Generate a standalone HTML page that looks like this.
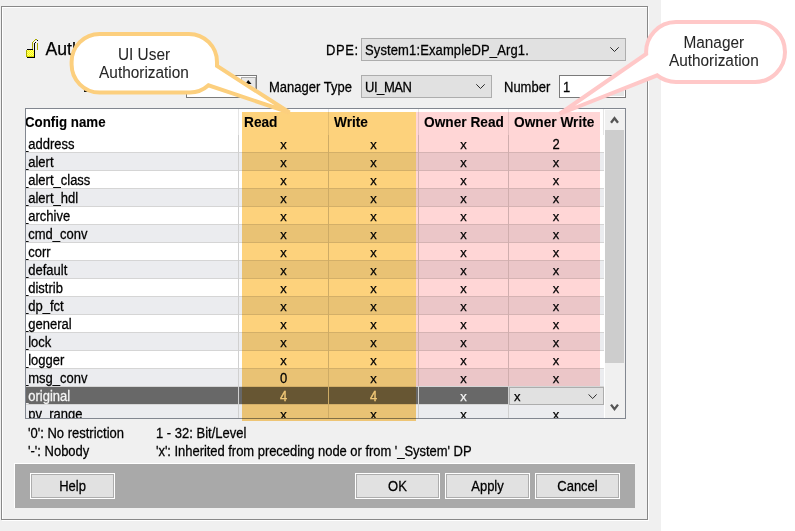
<!DOCTYPE html><html><head><meta charset="utf-8"><style>
*{margin:0;padding:0;box-sizing:border-box}
html,body{width:795px;height:531px;overflow:hidden}
body{position:relative;background:#fff;font-family:"Liberation Sans",sans-serif;color:#000;font-size:13px;-webkit-text-stroke:0.25px currentColor}
.a{position:absolute}
.bg{left:0;top:0;width:661px;height:531px;background:#f0f0f0}
.fr1{left:1px;top:6px;width:647px;height:514px;border:1px solid #888}
.fr2{left:2px;top:7px;width:647px;height:514px;border:1px solid #fff}
.t{white-space:nowrap;line-height:13px;transform:scaleY(1.08);transform-origin:0 11px}
.hd{white-space:nowrap;line-height:14px;font-weight:bold;font-size:13.7px;-webkit-text-stroke:0.1px #000;transform:scaleY(1.11);transform-origin:0 2px}
.ct{position:absolute;white-space:nowrap;text-align:center;font-size:15.4px;line-height:18px;color:#262626;-webkit-text-stroke:0.05px #262626;transform:scaleY(1.12);transform-origin:50% 14px}
.combo{background:#e1e1e1;border:1px solid #adadad}
.spin{background:#fff;border:1px solid #7a7a7a}
.btnbar{left:14px;top:463px;width:621px;height:45px;background:#a9a9a9;border-top:1px solid #fff;border-left:1px solid #fff}
.btn{top:473px;width:85px;height:26px;border:1px solid #fff;background:#e1e1e1}
.btn i{position:absolute;left:0;top:0;right:0;bottom:0;border:1px solid #adadad}
.btn span{position:absolute;left:0;right:0;top:6px;text-align:center;font-size:13px;line-height:13px;transform:scaleY(1.1);transform-origin:50% 11px}
.tbl{left:25px;top:108px;width:601px;height:311px;border:1px solid #828790;background:#fff;overflow:hidden}
.row{left:0;width:578px;height:18px}
.cell{position:absolute;top:0;height:17px;text-align:center;line-height:17px;font-size:13px}
.ov{mix-blend-mode:multiply}
</style></head><body>
<div class="a bg"></div>
<div class="a fr2"></div><div class="a fr1"></div>
<svg class="a" style="left:24px;top:37px" width="16" height="22" shape-rendering="crispEdges"><rect x="3" y="13" width="7" height="7" fill="#fbfb80"/><rect x="4" y="13" width="1" height="1" fill="#ffff00"/><rect x="6" y="13" width="1" height="1" fill="#ffff00"/><rect x="8" y="13" width="1" height="1" fill="#ffff00"/><rect x="3" y="14" width="1" height="1" fill="#ffff00"/><rect x="5" y="14" width="1" height="1" fill="#ffff00"/><rect x="7" y="14" width="1" height="1" fill="#ffff00"/><rect x="9" y="14" width="1" height="1" fill="#ffff00"/><rect x="4" y="15" width="1" height="1" fill="#ffff00"/><rect x="6" y="15" width="1" height="1" fill="#ffff00"/><rect x="8" y="15" width="1" height="1" fill="#ffff00"/><rect x="3" y="16" width="1" height="1" fill="#ffff00"/><rect x="5" y="16" width="1" height="1" fill="#ffff00"/><rect x="7" y="16" width="1" height="1" fill="#ffff00"/><rect x="9" y="16" width="1" height="1" fill="#ffff00"/><rect x="4" y="17" width="1" height="1" fill="#ffff00"/><rect x="6" y="17" width="1" height="1" fill="#ffff00"/><rect x="8" y="17" width="1" height="1" fill="#ffff00"/><rect x="3" y="18" width="1" height="1" fill="#ffff00"/><rect x="5" y="18" width="1" height="1" fill="#ffff00"/><rect x="7" y="18" width="1" height="1" fill="#ffff00"/><rect x="9" y="18" width="1" height="1" fill="#ffff00"/><rect x="4" y="19" width="1" height="1" fill="#ffff00"/><rect x="6" y="19" width="1" height="1" fill="#ffff00"/><rect x="8" y="19" width="1" height="1" fill="#ffff00"/><rect x="3" y="19" width="7" height="1" fill="#d8d800"/><rect x="3" y="12" width="6" height="1" fill="#000"/><rect x="2" y="13" width="1" height="7" fill="#a8a800"/><rect x="3" y="20" width="8" height="1" fill="#000"/><rect x="10" y="6" width="1" height="14" fill="#000"/><rect x="8" y="5" width="1" height="7" fill="#a8a800"/><rect x="9" y="4" width="1" height="1" fill="#a8a800"/><rect x="10" y="3" width="1" height="1" fill="#a8a800"/><rect x="11" y="2" width="2" height="1" fill="#a8a800"/><rect x="13" y="3" width="1" height="1" fill="#000"/><rect x="11" y="5" width="1" height="1" fill="#000"/><rect x="13" y="6" width="1" height="7" fill="#a8a800"/></svg>
<div class="a" style="left:45.5px;top:38.7px;font-size:17.6px;line-height:20px;white-space:nowrap">Authorization</div>
<div class="a t" style="left:326px;top:44px;letter-spacing:0.6px">DPE:</div>
<div class="a combo" style="left:361px;top:38px;width:265px;height:23px"></div>
<div class="a t" style="left:365px;top:44px;letter-spacing:0.12px">System1:ExampleDP_Arg1.</div>
<svg class="a" style="left:609px;top:46px" width="12" height="8"><path d="M1.3 1.3 L5.5 5.5 L9.7 1.3" fill="none" stroke="#2a2a2a" stroke-width="1"/></svg>
<div class="a" style="left:84px;top:90px;width:4px;height:2px;background:#111"></div>
<div class="a spin" style="left:186px;top:75px;width:71px;height:23px"></div>
<div class="a" style="left:241px;top:77px;width:15px;height:12px;background:#e8e8e8;border:1px solid #adadad"></div>
<svg class="a" style="left:245px;top:79px" width="8" height="6"><path d="M0.3 5 L3.2 1 L6.5 5Z" fill="#000"/></svg>
<div class="a t" style="left:269px;top:81px">Manager Type</div>
<div class="a combo" style="left:361px;top:75px;width:131px;height:23px"></div>
<div class="a t" style="left:365px;top:81px;letter-spacing:-0.45px">UI_MAN</div>
<svg class="a" style="left:475px;top:83px" width="12" height="8"><path d="M1.3 1.3 L5.5 5.5 L9.7 1.3" fill="none" stroke="#2a2a2a" stroke-width="1"/></svg>
<div class="a t" style="left:504px;top:81px">Number</div>
<div class="a spin" style="left:559px;top:75px;width:67px;height:23px"></div>
<div class="a" style="left:611px;top:77px;width:13px;height:19px;background:#e5e5e5"></div>
<div class="a t" style="left:563px;top:81px">1</div>
<div class="a tbl">
<div class="a" style="left:212px;top:0;width:1px;height:26px;background:#e5e5e5"></div>
<div class="a" style="left:302px;top:0;width:1px;height:26px;background:#e5e5e5"></div>
<div class="a" style="left:392px;top:0;width:1px;height:26px;background:#e5e5e5"></div>
<div class="a" style="left:482px;top:0;width:1px;height:26px;background:#e5e5e5"></div>
<div class="a" style="left:577px;top:0;width:1px;height:26px;background:#e5e5e5"></div>
<div class="a hd" style="left:-1px;top:6px;font-size:13.3px;">Config name</div>
<div class="a hd" style="left:218px;top:6px;">Read</div>
<div class="a hd" style="left:308px;top:6px;">Write</div>
<div class="a hd" style="left:398px;top:6px;">Owner Read</div>
<div class="a hd" style="left:488px;top:6px;">Owner Write</div>
<div class="a" style="left:0;top:26px;width:578px;height:17px;background:#ffffff"></div>
<div class="a" style="left:0;top:43px;width:578px;height:1px;background:#d5d5d5"></div>
<div class="a t" style="left:-5px;top:29px;color:#000">_address</div>
<div class="a" style="left:302px;top:26px;width:1px;height:18px;background:#d0d0d0"></div>
<div class="a t" style="left:213px;top:29px;width:89px;text-align:center;color:#000;transform:none">x</div>
<div class="a" style="left:392px;top:26px;width:1px;height:18px;background:#d0d0d0"></div>
<div class="a t" style="left:303px;top:29px;width:89px;text-align:center;color:#000;transform:none">x</div>
<div class="a" style="left:482px;top:26px;width:1px;height:18px;background:#d0d0d0"></div>
<div class="a t" style="left:393px;top:29px;width:89px;text-align:center;color:#000;transform:none">x</div>
<div class="a t" style="left:483px;top:29px;width:94px;text-align:center;color:#000;transform:scaleY(1.1)">2</div>
<div class="a" style="left:212px;top:26px;width:1px;height:18px;background:#d0d0d0"></div>
<div class="a" style="left:0;top:44px;width:578px;height:17px;background:#ebecef"></div>
<div class="a" style="left:0;top:61px;width:578px;height:1px;background:#d5d5d5"></div>
<div class="a t" style="left:-5px;top:47px;color:#000">_alert</div>
<div class="a" style="left:302px;top:44px;width:1px;height:18px;background:#d0d0d0"></div>
<div class="a t" style="left:213px;top:47px;width:89px;text-align:center;color:#000;transform:none">x</div>
<div class="a" style="left:392px;top:44px;width:1px;height:18px;background:#d0d0d0"></div>
<div class="a t" style="left:303px;top:47px;width:89px;text-align:center;color:#000;transform:none">x</div>
<div class="a" style="left:482px;top:44px;width:1px;height:18px;background:#d0d0d0"></div>
<div class="a t" style="left:393px;top:47px;width:89px;text-align:center;color:#000;transform:none">x</div>
<div class="a t" style="left:483px;top:47px;width:94px;text-align:center;color:#000;transform:none">x</div>
<div class="a" style="left:212px;top:44px;width:1px;height:18px;background:#d0d0d0"></div>
<div class="a" style="left:0;top:62px;width:578px;height:17px;background:#ffffff"></div>
<div class="a" style="left:0;top:79px;width:578px;height:1px;background:#d5d5d5"></div>
<div class="a t" style="left:-5px;top:65px;color:#000">_alert_class</div>
<div class="a" style="left:302px;top:62px;width:1px;height:18px;background:#d0d0d0"></div>
<div class="a t" style="left:213px;top:65px;width:89px;text-align:center;color:#000;transform:none">x</div>
<div class="a" style="left:392px;top:62px;width:1px;height:18px;background:#d0d0d0"></div>
<div class="a t" style="left:303px;top:65px;width:89px;text-align:center;color:#000;transform:none">x</div>
<div class="a" style="left:482px;top:62px;width:1px;height:18px;background:#d0d0d0"></div>
<div class="a t" style="left:393px;top:65px;width:89px;text-align:center;color:#000;transform:none">x</div>
<div class="a t" style="left:483px;top:65px;width:94px;text-align:center;color:#000;transform:none">x</div>
<div class="a" style="left:212px;top:62px;width:1px;height:18px;background:#d0d0d0"></div>
<div class="a" style="left:0;top:80px;width:578px;height:17px;background:#ebecef"></div>
<div class="a" style="left:0;top:97px;width:578px;height:1px;background:#d5d5d5"></div>
<div class="a t" style="left:-5px;top:83px;color:#000">_alert_hdl</div>
<div class="a" style="left:302px;top:80px;width:1px;height:18px;background:#d0d0d0"></div>
<div class="a t" style="left:213px;top:83px;width:89px;text-align:center;color:#000;transform:none">x</div>
<div class="a" style="left:392px;top:80px;width:1px;height:18px;background:#d0d0d0"></div>
<div class="a t" style="left:303px;top:83px;width:89px;text-align:center;color:#000;transform:none">x</div>
<div class="a" style="left:482px;top:80px;width:1px;height:18px;background:#d0d0d0"></div>
<div class="a t" style="left:393px;top:83px;width:89px;text-align:center;color:#000;transform:none">x</div>
<div class="a t" style="left:483px;top:83px;width:94px;text-align:center;color:#000;transform:none">x</div>
<div class="a" style="left:212px;top:80px;width:1px;height:18px;background:#d0d0d0"></div>
<div class="a" style="left:0;top:98px;width:578px;height:17px;background:#ffffff"></div>
<div class="a" style="left:0;top:115px;width:578px;height:1px;background:#d5d5d5"></div>
<div class="a t" style="left:-5px;top:101px;color:#000">_archive</div>
<div class="a" style="left:302px;top:98px;width:1px;height:18px;background:#d0d0d0"></div>
<div class="a t" style="left:213px;top:101px;width:89px;text-align:center;color:#000;transform:none">x</div>
<div class="a" style="left:392px;top:98px;width:1px;height:18px;background:#d0d0d0"></div>
<div class="a t" style="left:303px;top:101px;width:89px;text-align:center;color:#000;transform:none">x</div>
<div class="a" style="left:482px;top:98px;width:1px;height:18px;background:#d0d0d0"></div>
<div class="a t" style="left:393px;top:101px;width:89px;text-align:center;color:#000;transform:none">x</div>
<div class="a t" style="left:483px;top:101px;width:94px;text-align:center;color:#000;transform:none">x</div>
<div class="a" style="left:212px;top:98px;width:1px;height:18px;background:#d0d0d0"></div>
<div class="a" style="left:0;top:116px;width:578px;height:17px;background:#ebecef"></div>
<div class="a" style="left:0;top:133px;width:578px;height:1px;background:#d5d5d5"></div>
<div class="a t" style="left:-5px;top:119px;color:#000">_cmd_conv</div>
<div class="a" style="left:302px;top:116px;width:1px;height:18px;background:#d0d0d0"></div>
<div class="a t" style="left:213px;top:119px;width:89px;text-align:center;color:#000;transform:none">x</div>
<div class="a" style="left:392px;top:116px;width:1px;height:18px;background:#d0d0d0"></div>
<div class="a t" style="left:303px;top:119px;width:89px;text-align:center;color:#000;transform:none">x</div>
<div class="a" style="left:482px;top:116px;width:1px;height:18px;background:#d0d0d0"></div>
<div class="a t" style="left:393px;top:119px;width:89px;text-align:center;color:#000;transform:none">x</div>
<div class="a t" style="left:483px;top:119px;width:94px;text-align:center;color:#000;transform:none">x</div>
<div class="a" style="left:212px;top:116px;width:1px;height:18px;background:#d0d0d0"></div>
<div class="a" style="left:0;top:134px;width:578px;height:17px;background:#ffffff"></div>
<div class="a" style="left:0;top:151px;width:578px;height:1px;background:#d5d5d5"></div>
<div class="a t" style="left:-5px;top:137px;color:#000">_corr</div>
<div class="a" style="left:302px;top:134px;width:1px;height:18px;background:#d0d0d0"></div>
<div class="a t" style="left:213px;top:137px;width:89px;text-align:center;color:#000;transform:none">x</div>
<div class="a" style="left:392px;top:134px;width:1px;height:18px;background:#d0d0d0"></div>
<div class="a t" style="left:303px;top:137px;width:89px;text-align:center;color:#000;transform:none">x</div>
<div class="a" style="left:482px;top:134px;width:1px;height:18px;background:#d0d0d0"></div>
<div class="a t" style="left:393px;top:137px;width:89px;text-align:center;color:#000;transform:none">x</div>
<div class="a t" style="left:483px;top:137px;width:94px;text-align:center;color:#000;transform:none">x</div>
<div class="a" style="left:212px;top:134px;width:1px;height:18px;background:#d0d0d0"></div>
<div class="a" style="left:0;top:152px;width:578px;height:17px;background:#ebecef"></div>
<div class="a" style="left:0;top:169px;width:578px;height:1px;background:#d5d5d5"></div>
<div class="a t" style="left:-5px;top:155px;color:#000">_default</div>
<div class="a" style="left:302px;top:152px;width:1px;height:18px;background:#d0d0d0"></div>
<div class="a t" style="left:213px;top:155px;width:89px;text-align:center;color:#000;transform:none">x</div>
<div class="a" style="left:392px;top:152px;width:1px;height:18px;background:#d0d0d0"></div>
<div class="a t" style="left:303px;top:155px;width:89px;text-align:center;color:#000;transform:none">x</div>
<div class="a" style="left:482px;top:152px;width:1px;height:18px;background:#d0d0d0"></div>
<div class="a t" style="left:393px;top:155px;width:89px;text-align:center;color:#000;transform:none">x</div>
<div class="a t" style="left:483px;top:155px;width:94px;text-align:center;color:#000;transform:none">x</div>
<div class="a" style="left:212px;top:152px;width:1px;height:18px;background:#d0d0d0"></div>
<div class="a" style="left:0;top:170px;width:578px;height:17px;background:#ffffff"></div>
<div class="a" style="left:0;top:187px;width:578px;height:1px;background:#d5d5d5"></div>
<div class="a t" style="left:-5px;top:173px;color:#000">_distrib</div>
<div class="a" style="left:302px;top:170px;width:1px;height:18px;background:#d0d0d0"></div>
<div class="a t" style="left:213px;top:173px;width:89px;text-align:center;color:#000;transform:none">x</div>
<div class="a" style="left:392px;top:170px;width:1px;height:18px;background:#d0d0d0"></div>
<div class="a t" style="left:303px;top:173px;width:89px;text-align:center;color:#000;transform:none">x</div>
<div class="a" style="left:482px;top:170px;width:1px;height:18px;background:#d0d0d0"></div>
<div class="a t" style="left:393px;top:173px;width:89px;text-align:center;color:#000;transform:none">x</div>
<div class="a t" style="left:483px;top:173px;width:94px;text-align:center;color:#000;transform:none">x</div>
<div class="a" style="left:212px;top:170px;width:1px;height:18px;background:#d0d0d0"></div>
<div class="a" style="left:0;top:188px;width:578px;height:17px;background:#ebecef"></div>
<div class="a" style="left:0;top:205px;width:578px;height:1px;background:#d5d5d5"></div>
<div class="a t" style="left:-5px;top:191px;color:#000">_dp_fct</div>
<div class="a" style="left:302px;top:188px;width:1px;height:18px;background:#d0d0d0"></div>
<div class="a t" style="left:213px;top:191px;width:89px;text-align:center;color:#000;transform:none">x</div>
<div class="a" style="left:392px;top:188px;width:1px;height:18px;background:#d0d0d0"></div>
<div class="a t" style="left:303px;top:191px;width:89px;text-align:center;color:#000;transform:none">x</div>
<div class="a" style="left:482px;top:188px;width:1px;height:18px;background:#d0d0d0"></div>
<div class="a t" style="left:393px;top:191px;width:89px;text-align:center;color:#000;transform:none">x</div>
<div class="a t" style="left:483px;top:191px;width:94px;text-align:center;color:#000;transform:none">x</div>
<div class="a" style="left:212px;top:188px;width:1px;height:18px;background:#d0d0d0"></div>
<div class="a" style="left:0;top:206px;width:578px;height:17px;background:#ffffff"></div>
<div class="a" style="left:0;top:223px;width:578px;height:1px;background:#d5d5d5"></div>
<div class="a t" style="left:-5px;top:209px;color:#000">_general</div>
<div class="a" style="left:302px;top:206px;width:1px;height:18px;background:#d0d0d0"></div>
<div class="a t" style="left:213px;top:209px;width:89px;text-align:center;color:#000;transform:none">x</div>
<div class="a" style="left:392px;top:206px;width:1px;height:18px;background:#d0d0d0"></div>
<div class="a t" style="left:303px;top:209px;width:89px;text-align:center;color:#000;transform:none">x</div>
<div class="a" style="left:482px;top:206px;width:1px;height:18px;background:#d0d0d0"></div>
<div class="a t" style="left:393px;top:209px;width:89px;text-align:center;color:#000;transform:none">x</div>
<div class="a t" style="left:483px;top:209px;width:94px;text-align:center;color:#000;transform:none">x</div>
<div class="a" style="left:212px;top:206px;width:1px;height:18px;background:#d0d0d0"></div>
<div class="a" style="left:0;top:224px;width:578px;height:17px;background:#ebecef"></div>
<div class="a" style="left:0;top:241px;width:578px;height:1px;background:#d5d5d5"></div>
<div class="a t" style="left:-5px;top:227px;color:#000">_lock</div>
<div class="a" style="left:302px;top:224px;width:1px;height:18px;background:#d0d0d0"></div>
<div class="a t" style="left:213px;top:227px;width:89px;text-align:center;color:#000;transform:none">x</div>
<div class="a" style="left:392px;top:224px;width:1px;height:18px;background:#d0d0d0"></div>
<div class="a t" style="left:303px;top:227px;width:89px;text-align:center;color:#000;transform:none">x</div>
<div class="a" style="left:482px;top:224px;width:1px;height:18px;background:#d0d0d0"></div>
<div class="a t" style="left:393px;top:227px;width:89px;text-align:center;color:#000;transform:none">x</div>
<div class="a t" style="left:483px;top:227px;width:94px;text-align:center;color:#000;transform:none">x</div>
<div class="a" style="left:212px;top:224px;width:1px;height:18px;background:#d0d0d0"></div>
<div class="a" style="left:0;top:242px;width:578px;height:17px;background:#ffffff"></div>
<div class="a" style="left:0;top:259px;width:578px;height:1px;background:#d5d5d5"></div>
<div class="a t" style="left:-5px;top:245px;color:#000">_logger</div>
<div class="a" style="left:302px;top:242px;width:1px;height:18px;background:#d0d0d0"></div>
<div class="a t" style="left:213px;top:245px;width:89px;text-align:center;color:#000;transform:none">x</div>
<div class="a" style="left:392px;top:242px;width:1px;height:18px;background:#d0d0d0"></div>
<div class="a t" style="left:303px;top:245px;width:89px;text-align:center;color:#000;transform:none">x</div>
<div class="a" style="left:482px;top:242px;width:1px;height:18px;background:#d0d0d0"></div>
<div class="a t" style="left:393px;top:245px;width:89px;text-align:center;color:#000;transform:none">x</div>
<div class="a t" style="left:483px;top:245px;width:94px;text-align:center;color:#000;transform:none">x</div>
<div class="a" style="left:212px;top:242px;width:1px;height:18px;background:#d0d0d0"></div>
<div class="a" style="left:0;top:260px;width:578px;height:17px;background:#ebecef"></div>
<div class="a" style="left:0;top:277px;width:578px;height:1px;background:#d5d5d5"></div>
<div class="a t" style="left:-5px;top:263px;color:#000">_msg_conv</div>
<div class="a" style="left:302px;top:260px;width:1px;height:18px;background:#d0d0d0"></div>
<div class="a t" style="left:213px;top:263px;width:89px;text-align:center;color:#000;transform:scaleY(1.1)">0</div>
<div class="a" style="left:392px;top:260px;width:1px;height:18px;background:#d0d0d0"></div>
<div class="a t" style="left:303px;top:263px;width:89px;text-align:center;color:#000;transform:none">x</div>
<div class="a" style="left:482px;top:260px;width:1px;height:18px;background:#d0d0d0"></div>
<div class="a t" style="left:393px;top:263px;width:89px;text-align:center;color:#000;transform:none">x</div>
<div class="a t" style="left:483px;top:263px;width:94px;text-align:center;color:#000;transform:none">x</div>
<div class="a" style="left:212px;top:260px;width:1px;height:18px;background:#d0d0d0"></div>
<div class="a" style="left:0;top:278px;width:578px;height:17px;background:#686868"></div>
<div class="a" style="left:0;top:295px;width:578px;height:1px;background:#d5d5d5"></div>
<div class="a t" style="left:-5px;top:281px;color:#f4f4f4">_original</div>
<div class="a" style="left:302px;top:278px;width:1px;height:18px;background:#d0d0d0"></div>
<div class="a t" style="left:213px;top:281px;width:89px;text-align:center;color:#f4f4f4;transform:scaleY(1.1)">4</div>
<div class="a" style="left:392px;top:278px;width:1px;height:18px;background:#d0d0d0"></div>
<div class="a t" style="left:303px;top:281px;width:89px;text-align:center;color:#f4f4f4;transform:scaleY(1.1)">4</div>
<div class="a" style="left:482px;top:278px;width:1px;height:18px;background:#d0d0d0"></div>
<div class="a t" style="left:393px;top:281px;width:89px;text-align:center;color:#f4f4f4;transform:none">x</div>
<div class="a" style="left:212px;top:278px;width:1px;height:18px;background:#d0d0d0"></div>
<div class="a" style="left:0;top:296px;width:578px;height:17px;background:#ebecef"></div>
<div class="a" style="left:0;top:313px;width:578px;height:1px;background:#d5d5d5"></div>
<div class="a t" style="left:-5px;top:299px;color:#000">_pv_range</div>
<div class="a" style="left:302px;top:296px;width:1px;height:18px;background:#d0d0d0"></div>
<div class="a t" style="left:213px;top:299px;width:89px;text-align:center;color:#000;transform:none">x</div>
<div class="a" style="left:392px;top:296px;width:1px;height:18px;background:#d0d0d0"></div>
<div class="a t" style="left:303px;top:299px;width:89px;text-align:center;color:#000;transform:none">x</div>
<div class="a" style="left:482px;top:296px;width:1px;height:18px;background:#d0d0d0"></div>
<div class="a t" style="left:393px;top:299px;width:89px;text-align:center;color:#000;transform:none">x</div>
<div class="a t" style="left:483px;top:299px;width:94px;text-align:center;color:#000;transform:none">x</div>
<div class="a" style="left:212px;top:296px;width:1px;height:18px;background:#d0d0d0"></div>
<div class="a combo" style="left:483px;top:278px;width:95px;height:18px"></div>
<div class="a t" style="left:488px;top:281px;transform:none">x</div>
<svg class="a" style="left:561px;top:285px" width="12" height="8"><path d="M1.5 0.4 L5.7 4.5 L9.6 0.4" fill="none" stroke="#2a2a2a" stroke-width="1"/></svg>
<div class="a" style="left:578px;top:0;width:21px;height:309px;background:#f0f0f0;border-left:1px solid #fff;border-top:1px solid #fafafa"></div>
<div class="a" style="left:579px;top:21px;width:19px;height:233px;background:#cdcdcd"></div>
<svg class="a" style="left:580px;top:3px" width="18" height="14"><path d="M5 10.8 L8.5 6.2 L12 10.8" fill="none" stroke="#555" stroke-width="2.3" stroke-linecap="butt"/></svg>
<svg class="a" style="left:580px;top:291px" width="18" height="14"><path d="M5 4.6 L8.5 9.2 L12 4.6" fill="none" stroke="#555" stroke-width="2.3" stroke-linecap="butt"/></svg>
</div>
<div class="a ov" style="left:242px;top:112px;width:174px;height:309px;background:#fdd27c"></div>
<div class="a ov" style="left:416px;top:112px;width:184px;height:274px;background:#ffd6d6"></div>
<div class="a t" style="left:28px;top:427px">'0': No restriction</div>
<div class="a t" style="left:28px;top:445px">'-': Nobody</div>
<div class="a t" style="left:156px;top:427px">1 - 32: Bit/Level</div>
<div class="a t" style="left:156px;top:445px;letter-spacing:-0.04px">'x': Inherited from preceding node or from '_System' DP</div>
<div class="a btnbar"></div>
<div class="a btn" style="left:30px"><i></i><span>Help</span></div>
<div class="a btn" style="left:355px"><i></i><span>OK</span></div>
<div class="a btn" style="left:445px"><i></i><span>Apply</span></div>
<div class="a btn" style="left:535px"><i></i><span>Cancel</span></div>
<svg class="a" style="left:0;top:0" width="795" height="531" viewBox="0 0 795 531">
<path d="M99.6 34 H189 A28 28 0 0 1 217 62 V66 L289.5 112.5 L208.5 85.3 A28 28 0 0 1 189 92.5 H99.6 A28 28 0 0 1 71.6 64.5 V62 A28 28 0 0 1 99.6 34 Z" fill="#fff" stroke="#fccf7e" stroke-width="4" stroke-linejoin="miter" stroke-miterlimit="3"/>
<path d="M676 22 H755 A30 30 0 0 1 755 82 H676 A30 30 0 0 1 657.2 75.4 L559.5 114 L646.2 54 A30 30 0 0 1 676 22 Z" fill="#fff" stroke="#ffc8c8" stroke-width="4" stroke-linejoin="miter" stroke-miterlimit="3"/>
</svg>
<div class="ct" style="left:70px;top:46px;width:148px">UI User</div><div class="ct" style="left:70px;top:64px;width:148px">Authorization</div>
<div class="ct" style="left:642.8px;top:34px;width:142px">Manager</div><div class="ct" style="left:642.8px;top:52px;width:142px">Authorization</div>
</body></html>
